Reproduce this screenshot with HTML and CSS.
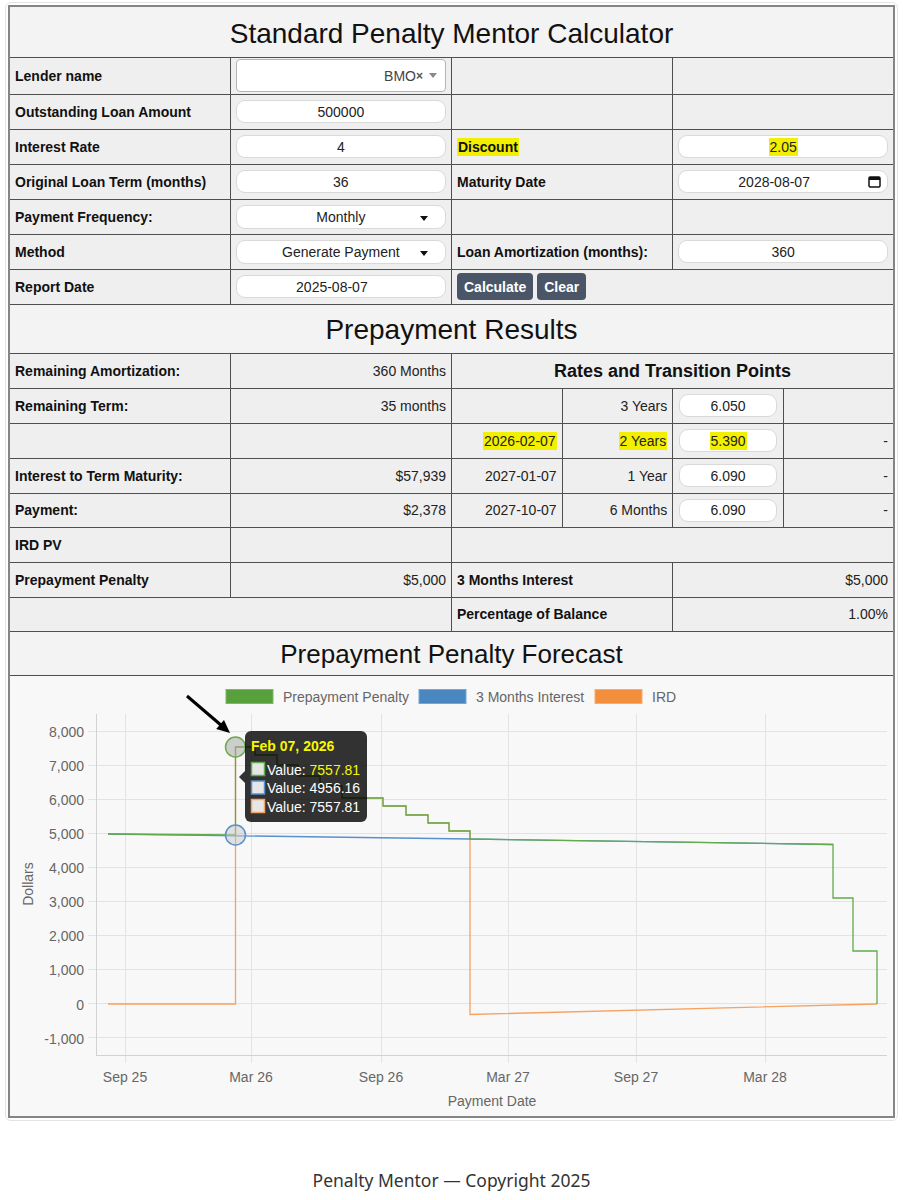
FILE: index.html
```html
<!DOCTYPE html>
<html lang="en">
<head>
<meta charset="utf-8">
<title>Standard Penalty Mentor Calculator</title>
<link rel="stylesheet" href="styles.css">
</head>
<body>
<div class="page">
<table class="calc">
<colgroup><col><col><col><col><col><col><col><col></colgroup>
<tbody>
<tr><th colspan="8" class="big top-title">Standard Penalty Mentor Calculator</th></tr>
<tr class="r-lender">
  <td colspan="2" class="lbl">Lender name</td>
  <td colspan="2"><div class="s2"><span class="s2-text">BMO</span><span class="s2-x">×</span><span class="s2-caret"></span></div></td>
  <td colspan="2"></td><td colspan="2"></td>
</tr>
<tr>
  <td colspan="2" class="lbl">Outstanding Loan Amount</td>
  <td colspan="2"><div class="field">500000</div></td>
  <td colspan="2"></td><td colspan="2"></td>
</tr>
<tr>
  <td colspan="2" class="lbl">Interest Rate</td>
  <td colspan="2"><div class="field">4</div></td>
  <td colspan="2" class="lbl"><span class="hl">Discount</span></td>
  <td colspan="2"><div class="field"><span class="hl">2.05</span></div></td>
</tr>
<tr>
  <td colspan="2" class="lbl">Original Loan Term (months)</td>
  <td colspan="2"><div class="field">36</div></td>
  <td colspan="2" class="lbl">Maturity Date</td>
  <td colspan="2"><div class="field date">2028-08-07<svg class="cal" width="13" height="12" viewBox="0 0 13 12"><rect x="1" y="1" width="11" height="10" rx="1.2" fill="none" stroke="#111" stroke-width="1.5"/><rect x="1" y="1" width="11" height="3" fill="#111"/></svg></div></td>
</tr>
<tr>
  <td colspan="2" class="lbl">Payment Frequency:</td>
  <td colspan="2"><div class="field sel">Monthly<span class="caret"></span></div></td>
  <td colspan="2"></td><td colspan="2"></td>
</tr>
<tr>
  <td colspan="2" class="lbl">Method</td>
  <td colspan="2"><div class="field sel">Generate Payment<span class="caret"></span></div></td>
  <td colspan="2" class="lbl">Loan Amortization (months):</td>
  <td colspan="2"><div class="field">360</div></td>
</tr>
<tr>
  <td colspan="2" class="lbl">Report Date</td>
  <td colspan="2"><div class="field date">2025-08-07</div></td>
  <td colspan="4"><div class="btns"><button class="btn">Calculate</button><button class="btn">Clear</button></div></td>
</tr>
<tr class="r-results"><th colspan="8" class="big">Prepayment Results</th></tr>
<tr>
  <td colspan="2" class="lbl">Remaining Amortization:</td>
  <td colspan="2" class="num">360 Months</td>
  <th colspan="4" class="subhead">Rates and Transition Points</th>
</tr>
<tr>
  <td colspan="2" class="lbl">Remaining Term:</td>
  <td colspan="2" class="num">35 months</td>
  <td></td>
  <td class="num">3 Years</td>
  <td class="rate"><div class="field">6.050</div></td>
  <td></td>
</tr>
<tr>
  <td colspan="2"></td>
  <td colspan="2"></td>
  <td class="num"><span class="hl">2026-02-07</span></td>
  <td class="num"><span class="hl">2 Years</span></td>
  <td class="rate"><div class="field"><span class="hl">5.390</span></div></td>
  <td class="num">-</td>
</tr>
<tr>
  <td colspan="2" class="lbl">Interest to Term Maturity:</td>
  <td colspan="2" class="num">$57,939</td>
  <td class="num">2027-01-07</td>
  <td class="num">1 Year</td>
  <td class="rate"><div class="field">6.090</div></td>
  <td class="num">-</td>
</tr>
<tr class="r-34">
  <td colspan="2" class="lbl">Payment:</td>
  <td colspan="2" class="num">$2,378</td>
  <td class="num">2027-10-07</td>
  <td class="num">6 Months</td>
  <td class="rate"><div class="field">6.090</div></td>
  <td class="num">-</td>
</tr>
<tr>
  <td colspan="2" class="lbl">IRD PV</td>
  <td colspan="2"></td>
  <td colspan="4"></td>
</tr>
<tr>
  <td colspan="2" class="lbl">Prepayment Penalty</td>
  <td colspan="2" class="num">$5,000</td>
  <td colspan="2" class="lbl">3 Months Interest</td>
  <td colspan="2" class="num">$5,000</td>
</tr>
<tr class="r-34">
  <td colspan="4"></td>
  <td colspan="2" class="lbl">Percentage of Balance</td>
  <td colspan="2" class="num">1.00%</td>
</tr>
<tr><th colspan="8" class="big chart-title">Prepayment Penalty Forecast</th></tr>
<tr>
  <td colspan="8" class="chart">
    <svg class="chart-svg" width="882" height="440" viewBox="10 677 882 440">
      <!-- legend -->
      <rect x="226" y="690.5" width="47" height="14" fill="#58a03b" stroke="#7db866" stroke-width="1"/>
      <text x="283" y="702.5" class="lg">Prepayment Penalty</text>
      <rect x="419" y="690.5" width="47" height="14" fill="#4a87c0" stroke="#77a6d4" stroke-width="1"/>
      <text x="476" y="702.5" class="lg">3 Months Interest</text>
      <rect x="595" y="690.5" width="47" height="14" fill="#f28e3c" stroke="#f6ad6e" stroke-width="1"/>
      <text x="652" y="702.5" class="lg">IRD</text>

      <!-- grid -->
      <g stroke="#e3e3e3" stroke-width="1" fill="none">
        <path d="M88 732.5H887M88 766.5H887M88 800.5H887M88 834.5H887M88 868.5H887M88 902.5H887M88 936.5H887M88 970.5H887M88 1004.5H887M88 1038.5H887"/>
        <path d="M125.5 715V1064M251.5 715V1064M381.5 715V1064M508.5 715V1064M636.5 715V1064M765.5 715V1064"/>
      </g>
      <g stroke="#d2d2d2" stroke-width="1" fill="none">
        <path d="M96.5 715V1056.5"/>
        <path d="M96 1056.5H887"/>
      </g>

      <!-- y labels -->
      <g class="tk" text-anchor="end">
        <text x="84" y="737.5">8,000</text>
        <text x="84" y="771.5">7,000</text>
        <text x="84" y="805.5">6,000</text>
        <text x="84" y="840">5,000</text>
        <text x="84" y="874">4,000</text>
        <text x="84" y="908">3,000</text>
        <text x="84" y="942">2,000</text>
        <text x="84" y="976">1,000</text>
        <text x="84" y="1010.5">0</text>
        <text x="84" y="1044.5">-1,000</text>
      </g>
      <!-- x labels -->
      <g class="tk" text-anchor="middle">
        <text x="125" y="1082.5">Sep 25</text>
        <text x="251" y="1082.5">Mar 26</text>
        <text x="381" y="1082.5">Sep 26</text>
        <text x="508" y="1082.5">Mar 27</text>
        <text x="636" y="1082.5">Sep 27</text>
        <text x="765" y="1082.5">Mar 28</text>
      </g>
      <text x="492" y="1106.5" class="tk" text-anchor="middle">Payment Date</text>
      <text class="tk" text-anchor="middle" transform="translate(33 885) rotate(-90)">Dollars</text>

      <!-- series -->
      <path d="M108 1005H235.5V748H255V756H277V766H298V777H320V787H342V799H383V807H406V816H428V824H449V832H470V1015.5L877 1005" fill="none" stroke="#f5a262" stroke-width="1.3"/>
      <path d="M108 835L470 840L833 845.5" fill="none" stroke="#5890cc" stroke-width="1.3"/>
      <path d="M108 835L235.5 836V748H255V756H277V766H298V777H320V787H342V799H383V807H406V816H428V824H449V832H470V840L833 845.5V899H853V952H877V1005" fill="none" stroke="#62aa4c" stroke-width="1.3"/>

      <!-- hover points -->
      <circle cx="235.5" cy="748" r="10" fill="rgba(170,170,170,0.55)" stroke="#6aab4f" stroke-width="1.5"/>
      <circle cx="235.5" cy="836" r="10" fill="rgba(200,200,200,0.5)" stroke="#5890cc" stroke-width="1.5"/>

      <!-- tooltip -->
      <rect x="245" y="732" width="122" height="91" rx="6" fill="rgba(0,0,0,0.8)"/>
      <polygon points="245,772 239,778 245,784" fill="rgba(0,0,0,0.8)"/>
      <text x="251" y="752" class="tt-title">Feb 07, 2026</text>
      <rect x="251.5" y="763.5" width="13" height="13" fill="#e6e6e6" stroke="#62aa4c" stroke-width="1.5"/>
      <rect x="251.5" y="782" width="13" height="13" fill="#e6e6e6" stroke="#5890cc" stroke-width="1.5"/>
      <rect x="251.5" y="800.5" width="13" height="13" fill="#e6e6e6" stroke="#f5a262" stroke-width="1.5"/>
      <text x="267" y="775.5" class="tt">Value: <tspan class="tt-hl">7557.81</tspan></text>
      <text x="267" y="794" class="tt">Value: 4956.16</text>
      <text x="267" y="812.5" class="tt">Value: 7557.81</text>

      <!-- annotation arrow -->
      <line x1="187" y1="697" x2="222" y2="727" stroke="#000" stroke-width="3"/>
      <polygon points="230,734 216.2,730.1 224,721" fill="#000"/>
    </svg>
  </td>
</tr>
</tbody>
</table>
</div>
<footer class="foot">Penalty Mentor — Copyright 2025</footer>
</body>
</html>
```

FILE: styles.css
```css
* { box-sizing: border-box; }
html, body { margin: 0; padding: 0; background: #fff; }
body { font-family: "Liberation Sans", Arial, Helvetica, sans-serif; color: #111; }

.page {
  margin: 2px 5px 0;
  border: 1px solid #e3e3e3;
  border-radius: 6px;
  padding: 2px;
}

.calc {
  width: 100%;
  border-collapse: collapse;
  table-layout: fixed;
  border: 2px solid #858585;
}
.calc td, .calc th {
  border: 1px solid #4f4f4f;
  background: #efefef;
  padding: 0 5px;
  height: 35px;
  font-size: 14px;
  font-weight: normal;
  vertical-align: middle;
  color: #222;
  text-align: left;
  white-space: nowrap;
}
.calc .big {
  background: #f3f3f3;
  font-size: 28px;
  text-align: center;
  color: #111;
  height: 51px;
  padding-top: 2px;
}
.calc .top-title { padding-top: 4px; }
.calc .r-results .big { height: 49px; }
.calc .chart-title { font-size: 26px; height: 44px; }
.calc .r-lender td { height: 37px; }
.calc .r-34 td { height: 34px; }
.calc .lbl { font-weight: bold; color: #111; }
.calc .num { text-align: right; }
.calc .subhead { font-weight: bold; font-size: 18px; text-align: center; color: #111; padding-top: 2px; }
.calc .rate { padding: 0 6px; }
.calc .chart { padding: 0; height: 441px; background: #f8f8f8; }

.hl { background: #f2f000; padding: 1px 1px; }

.field {
  position: relative;
  height: 23px;
  background: #fff;
  border: 1px solid #d9d9d9;
  border-radius: 9px;
  display: flex;
  align-items: center;
  justify-content: center;
  font-size: 14px;
  color: #222;
}
.field.date { padding-right: 18px; }
.field.sel { height: 24px; }
.cal { position: absolute; right: 6px; top: 5px; }
.caret {
  position: absolute;
  right: 17px;
  top: 10px;
  width: 0; height: 0;
  border-left: 4.5px solid transparent;
  border-right: 4.5px solid transparent;
  border-top: 5px solid #111;
}

.s2 {
  height: 33px;
  background: #fff;
  border: 1px solid #b5b5b5;
  border-radius: 4px;
  display: flex;
  align-items: center;
  justify-content: flex-end;
  padding-right: 8px;
  font-size: 14px;
}
.s2-text { color: #444; }
.s2-x { color: #555; font-size: 12px; font-weight: bold; margin-right: 6px; }
.s2-caret {
  width: 0; height: 0;
  border-left: 4px solid transparent;
  border-right: 4px solid transparent;
  border-top: 5px solid #888;
}

.btns { display: flex; gap: 4px; }
.btn {
  height: 27px;
  padding: 0 7px;
  border: 0;
  border-radius: 4px;
  background: #4a5568;
  color: #fff;
  font-family: "Liberation Sans", Arial, sans-serif;
  font-weight: bold;
  font-size: 14px;
}

.chart-svg { display: block; }
.chart-svg text { font-family: "Liberation Sans", Arial, sans-serif; }
.lg { font-size: 14px; fill: #666; }
.tk { font-size: 14px; fill: #666; }
.tt-title { font-size: 14px; font-weight: bold; fill: #f7f700; }
.tt { font-size: 14px; fill: #fff; }
.tt-hl { fill: #f7f700; }

.foot {
  margin-top: 47px;
  text-align: center;
  font-family: "Noto Sans", "Open Sans", sans-serif;
  font-size: 17.5px;
  line-height: 24px;
  color: #333;
}
```
